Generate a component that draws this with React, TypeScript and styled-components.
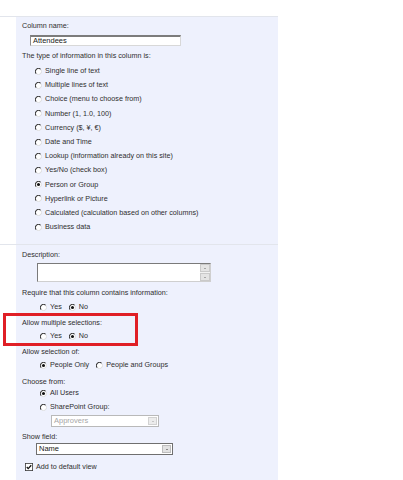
import React from 'react';
import styled, { createGlobalStyle } from 'styled-components';

const Global = createGlobalStyle`
  html, body { margin: 0; padding: 0; background: #fff; }
  body { font-family: "Liberation Sans", Arial, sans-serif; }
`;

const Page = styled.div`
  width: 403px;
  height: 480px;
  overflow: hidden;
  padding-top: 16px;
  box-sizing: border-box;
`;

const Section = styled.section<{ $h: number }>`
  display: flex;
  width: 278px;
  height: ${(p) => p.$h}px;
  border-top: 1px solid #e2e5ec;
`;

const Gutter = styled.div`
  width: 16px;
  flex: none;
  background: #fff;
`;

const Panel = styled.div<{ $pt: number }>`
  flex: 1;
  background: #eef1fd;
  padding: ${(p) => p.$pt}px 0 0 6px;
  display: flex;
  flex-direction: column;
  align-items: flex-start;
  font-size: 7.2px;
  line-height: 10px;
  color: #2e2e2e;
`;

const Label = styled.div<{ $mt?: number }>`
  margin-top: ${(p) => p.$mt ?? 0}px;
  height: 10px;
  white-space: nowrap;
`;

const TextInput = styled.div`
  margin: 4px 0 0 8px;
  width: 151px;
  height: 11px;
  box-sizing: border-box;
  background: #fff;
  border-top: 2px solid #7c7c7c;
  border-left: 1px solid #8a8a8a;
  border-right: 1px solid #d8d8d8;
  border-bottom: 1px solid #d8d8d8;
  padding-left: 2px;
  font-size: 7.5px;
  line-height: 8px;
  color: #1a1a1a;
`;

const RadioList = styled.div`
  margin: 3px 0 0 13px;
  display: flex;
  flex-direction: column;
`;

const ListItem = styled.div`
  height: 14.2px;
  display: flex;
  align-items: center;
  white-space: nowrap;
`;

const OptionRow = styled.div<{ $mt?: number; $indent: number }>`
  margin: ${(p) => p.$mt ?? 0}px 0 0 ${(p) => p.$indent}px;
  height: 10px;
  display: flex;
  align-items: center;
  white-space: nowrap;
`;

const Option = styled.span<{ $gapAfter?: number }>`
  display: inline-flex;
  align-items: center;
  margin-right: ${(p) => p.$gapAfter ?? 0}px;
`;

const RadioSvg = styled.svg`
  width: 7px;
  height: 7px;
  margin-right: 3px;
  flex: none;
`;

const Radio = ({ checked }: { checked?: boolean }) => (
  <RadioSvg viewBox="0 0 12 12">
    <circle cx="6" cy="6" r="5.3" fill="#fff" />
    <path d="M2.3 9.7 A5.2 5.2 0 0 1 9.7 2.3" stroke="#3a3a3a" strokeWidth="1.8" fill="none" />
    <path d="M9.7 2.3 A5.2 5.2 0 0 1 2.3 9.7" stroke="#cfcfcf" strokeWidth="1.2" fill="none" />
    {checked && <circle cx="6" cy="6" r="2.6" fill="#111" />}
  </RadioSvg>
);

const TextArea = styled.div`
  margin: 3px 0 0 15px;
  width: 174px;
  height: 19px;
  box-sizing: border-box;
  background: #fff;
  border-top: 1px solid #7a7a7a;
  border-left: 1px solid #7a7a7a;
  border-right: 1px solid #cfcfcf;
  border-bottom: 1px solid #cfcfcf;
  display: flex;
  justify-content: flex-end;
`;

const ScrollCol = styled.div`
  width: 10px;
  display: flex;
  flex-direction: column;
  gap: 1px;
  background: #f2f2f2;
`;

const ScrollBtn = styled.div<{ $down?: boolean }>`
  flex: 1;
  background: #e4e4e4;
  border: 1px solid #cacaca;
  display: flex;
  align-items: center;
  justify-content: center;
  &::after {
    content: '';
    border-left: 1.5px solid transparent;
    border-right: 1.5px solid transparent;
    ${(p) => (p.$down ? 'border-top: 1.5px solid #666;' : 'border-bottom: 1.5px solid #666;')}
  }
`;

const Highlight = styled.div`
  position: relative;
  display: flex;
  flex-direction: column;
  align-items: flex-start;
  &::after {
    content: '';
    position: absolute;
    left: -19px;
    top: 1px;
    width: 135px;
    height: 33px;
    box-sizing: border-box;
    border: 3px solid #e01f26;
    pointer-events: none;
  }
`;

const Select = styled.div<{ $w: number; $ml: number; $mt: number; $disabled?: boolean }>`
  margin: ${(p) => p.$mt}px 0 0 ${(p) => p.$ml}px;
  width: ${(p) => p.$w}px;
  height: 12px;
  box-sizing: border-box;
  background: #fff;
  border: 1px solid ${(p) => (p.$disabled ? '#b9b9b9' : '#6f6f6f')};
  display: flex;
  align-items: center;
  font-size: 7.5px;
  color: ${(p) => (p.$disabled ? '#a6a6a6' : '#1a1a1a')};
  padding-left: 2px;
`;

const SelectText = styled.span`
  flex: 1;
  white-space: nowrap;
`;

const SelectBtn = styled.span<{ $disabled?: boolean }>`
  width: 9px;
  height: 8px;
  margin-right: 1px;
  background: ${(p) => (p.$disabled ? '#ececec' : '#e2e2e2')};
  border: 1px solid ${(p) => (p.$disabled ? '#d2d2d2' : '#bdbdbd')};
  box-sizing: border-box;
  display: flex;
  align-items: center;
  justify-content: center;
  &::after {
    content: '';
    border-left: 1.5px solid transparent;
    border-right: 1.5px solid transparent;
    border-top: 1.5px solid ${(p) => (p.$disabled ? '#a0a0a0' : '#333')};
  }
`;

const CheckRow = styled.div`
  margin: 7px 0 0 3px;
  height: 10px;
  display: flex;
  align-items: center;
  white-space: nowrap;
`;

const CheckBox = styled.svg`
  width: 8px;
  height: 8px;
  margin-right: 3px;
  flex: none;
`;

const types = [
  'Single line of text',
  'Multiple lines of text',
  'Choice (menu to choose from)',
  'Number (1, 1.0, 100)',
  'Currency ($, ¥, €)',
  'Date and Time',
  'Lookup (information already on this site)',
  'Yes/No (check box)',
  'Person or Group',
  'Hyperlink or Picture',
  'Calculated (calculation based on other columns)',
  'Business data',
];

export default function App() {
  return (
    <>
      <Global />
      <Page>
        <Section $h={227}>
          <Gutter />
          <Panel $pt={4}>
            <Label>Column name:</Label>
            <TextInput>Attendees</TextInput>
            <Label $mt={5}>The type of information in this column is:</Label>
            <RadioList>
              {types.map((t) => (
                <ListItem key={t}>
                  <Radio checked={t === 'Person or Group'} />
                  {t}
                </ListItem>
              ))}
            </RadioList>
          </Panel>
        </Section>
        <Section $h={235}>
          <Gutter />
          <Panel $pt={5}>
            <Label>Description:</Label>
            <TextArea>
              <ScrollCol>
                <ScrollBtn />
                <ScrollBtn $down />
              </ScrollCol>
            </TextArea>
            <Label $mt={6}>Require that this column contains information:</Label>
            <OptionRow $mt={4} $indent={18}>
              <Option $gapAfter={7}><Radio />Yes</Option>
              <Option><Radio checked />No</Option>
            </OptionRow>
            <Highlight>
              <Label $mt={6}>Allow multiple selections:</Label>
              <OptionRow $mt={3} $indent={18}>
                <Option $gapAfter={7}><Radio />Yes</Option>
                <Option><Radio checked />No</Option>
              </OptionRow>
            </Highlight>
            <Label $mt={6}>Allow selection of:</Label>
            <OptionRow $mt={3} $indent={18}>
              <Option $gapAfter={7}><Radio checked />People Only</Option>
              <Option><Radio />People and Groups</Option>
            </OptionRow>
            <Label $mt={7}>Choose from:</Label>
            <OptionRow $mt={1} $indent={18}>
              <Option><Radio checked />All Users</Option>
            </OptionRow>
            <OptionRow $mt={4} $indent={18}>
              <Option><Radio />SharePoint Group:</Option>
            </OptionRow>
            <Select $w={108} $ml={29} $mt={3} $disabled>
              <SelectText>Approvers</SelectText>
              <SelectBtn $disabled />
            </Select>
            <Label $mt={5}>Show field:</Label>
            <Select $w={137} $ml={14} $mt={1}>
              <SelectText>Name</SelectText>
              <SelectBtn />
            </Select>
            <CheckRow>
              <CheckBox viewBox="0 0 10 10">
                <rect x="0.5" y="0.5" width="9" height="9" fill="#fff" stroke="#3a3a3a" />
                <path d="M2.2 5 L4 7 L7.8 2.8" stroke="#111" strokeWidth="1.6" fill="none" />
              </CheckBox>
              Add to default view
            </CheckRow>
          </Panel>
        </Section>
      </Page>
    </>
  );
}
